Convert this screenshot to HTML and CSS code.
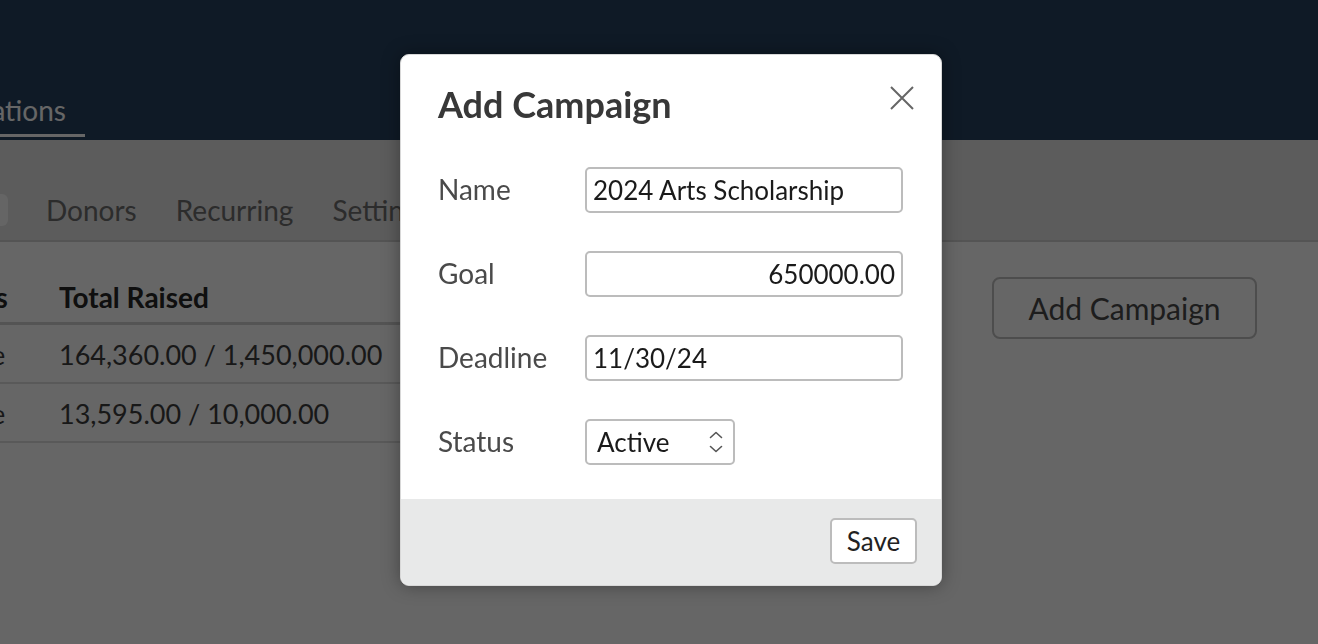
FILE: index.html
```html
<!DOCTYPE html>
<html lang="en">
<head>
<meta charset="utf-8">
<title>Campaigns</title>
<link rel="stylesheet" href="styles.css">
</head>
<body>
<div class="app">
  <header class="topbar">
    <nav class="mainnav">
      <a class="nav-item active">Donations</a>
    </nav>
  </header>
  <div class="subnav">
    <div class="pill-wrap"><span class="pill">Campaigns</span></div>
    <a class="tab">Donors</a>
    <a class="tab">Recurring</a>
    <a class="tab">Settings</a>
  </div>
  <main class="content">
    <table class="campaigns">
      <thead>
        <tr><th class="col-status">Status</th><th class="col-total">Total Raised</th><th class="col-rest"></th></tr>
      </thead>
      <tbody>
        <tr><td class="col-status">Active</td><td class="col-total">164,360.00 / 1,450,000.00</td><td class="col-rest"></td></tr>
        <tr><td class="col-status">Active</td><td class="col-total">13,595.00 / 10,000.00</td><td class="col-rest"></td></tr>
      </tbody>
    </table>
    <button class="add-btn">Add Campaign</button>
  </main>
</div>

<div class="overlay"></div>

<div class="modal" role="dialog" aria-labelledby="modal-title">
  <div class="modal-header">
    <h2 id="modal-title" class="modal-title">Add Campaign</h2>
    <button class="close-btn" aria-label="Close">
      <svg width="24" height="24" viewBox="0 0 24 24"><path d="M1 1 L23 23 M23 1 L1 23" stroke="#666" stroke-width="2" fill="none"/></svg>
    </button>
  </div>
  <div class="modal-body">
    <label class="field-label" for="f-name">Name</label>
    <input id="f-name" class="field-input" type="text" value="2024 Arts Scholarship">
    <label class="field-label" for="f-goal">Goal</label>
    <input id="f-goal" class="field-input num" type="text" value="650000.00">
    <label class="field-label" for="f-deadline">Deadline</label>
    <input id="f-deadline" class="field-input" type="text" value="11/30/24">
    <label class="field-label" for="f-status">Status</label>
    <div class="select-wrap">
      <select id="f-status" class="field-select">
        <option>Active</option>
        <option>Inactive</option>
      </select>
      <svg class="select-arrows" width="14" height="22" viewBox="0 0 14 22"><path d="M1.5 6.5 L7 1.5 L12.5 6.5 M1.5 15.5 L7 20.5 L12.5 15.5" stroke="#555" stroke-width="1.6" fill="none" stroke-linecap="round" stroke-linejoin="round"/></svg>
    </div>
  </div>
  <div class="modal-footer">
    <button class="save-btn">Save</button>
  </div>
</div>
</body>
</html>
```

FILE: styles.css
```css
* { box-sizing: border-box; }

html, body {
  margin: 0;
  padding: 0;
  height: 100%;
}

body {
  font-family: Lato, "Noto Sans", "Liberation Sans", sans-serif;
  background: #ffffff;
  overflow: hidden;
}

.app {
  width: 1318px;
  height: 644px;
  overflow: hidden;
}

/* ---- top bar ---- */
.topbar {
  height: 140px;
  background: #26415f;
  display: flex;
  align-items: flex-end;
}

.mainnav {
  width: 85px;
  display: flex;
  justify-content: flex-end;
  margin-bottom: 3px;
}

.nav-item {
  flex: none;
  font-size: 28px;
  line-height: 1.2;
  color: #ffffff;
  padding: 0 19px 6px;
  border-bottom: 3px solid #ffffff;
  white-space: nowrap;
}

/* ---- sub navigation ---- */
.subnav {
  height: 102px;
  background: #e5e5e5;
  border-bottom: 2px solid #d2d2d2;
  display: flex;
  align-items: center;
  padding-top: 50px;
  padding-bottom: 10px;
}

.pill-wrap {
  width: 8px;
  flex: none;
  display: flex;
  justify-content: flex-end;
}

.pill {
  flex: none;
  background: #fcfcfc;
  border-radius: 6px;
  font-size: 28px;
  line-height: 32px;
  padding: 0 19px;
  color: #333;
  white-space: nowrap;
}

.tab {
  font-size: 28px;
  line-height: 35px;
  color: #6e6e6e;
  padding: 0 19px;
  white-space: nowrap;
}
.pill-wrap + .tab { margin-left: 19px; }
.tab + .tab { margin-left: 1px; }

/* ---- content ---- */
.content {
  display: flex;
  align-items: flex-start;
  padding: 30px 61px 0 0;
}

.campaigns {
  border-collapse: collapse;
  margin-left: -70px;
}

.campaigns th,
.campaigns td {
  text-align: left;
  white-space: nowrap;
  padding: 0;
}

.campaigns th {
  font-size: 28px;
  font-weight: 700;
  color: #262626;
  line-height: 34px;
  padding-top: 8px;
  padding-bottom: 8px;
  border-bottom: 3px solid #d2d2d2;
}

.campaigns td {
  font-size: 27px;
  color: #3e3e3e;
  line-height: 34px;
  padding-top: 13px;
  padding-bottom: 10px;
  border-bottom: 2px solid #dedede;
}

.col-status { width: 129px; }
.col-total { width: 400px; }
.col-rest { width: 260px; }

.add-btn {
  margin-left: auto;
  margin-top: 5px;
  width: 265px;
  height: 62px;
  font-family: inherit;
  font-size: 30px;
  color: #4a4a4a;
  background: #ffffff;
  border: 2px solid #c0c0c0;
  border-radius: 8px;
  padding: 0;
}

/* ---- overlay ---- */
.overlay {
  position: fixed;
  inset: 0;
  background: rgba(0, 0, 0, 0.6);
}

/* ---- modal ---- */
.modal {
  position: absolute;
  left: 400px;
  top: 54px;
  width: 542px;
  height: 532px;
  background: #ffffff;
  border: 1px solid #d8d8d8;
  border-radius: 9px;
  overflow: hidden;
  box-shadow: 0 0 18px rgba(0, 0, 0, 0.35);
  display: flex;
  flex-direction: column;
}

.modal-header {
  display: flex;
  justify-content: space-between;
  align-items: flex-start;
  padding: 28px 27px 0 37px;
}

.modal-title {
  margin: 0;
  font-size: 36px;
  font-weight: 700;
  line-height: 43px;
  color: #383838;
}

.close-btn {
  margin-top: 3px;
  width: 24px;
  height: 24px;
  padding: 0;
  border: none;
  background: none;
  display: block;
}
.close-btn svg { display: block; }

.modal-body {
  flex: 1;
  display: grid;
  grid-template-columns: 147px 318px;
  grid-auto-rows: 46px;
  row-gap: 38px;
  align-items: center;
  padding: 41px 37px 0;
}

.field-label {
  font-size: 28px;
  color: #4a4a4a;
  position: relative;
  top: -1px;
}

.field-input {
  height: 46px;
  width: 318px;
  font-family: inherit;
  font-size: 26px;
  color: #1a1a1a;
  border: 2px solid #bcbcbc;
  border-radius: 5px;
  padding: 0 6px;
  background: #fff;
}
.field-input.num { text-align: right; }

.select-wrap {
  position: relative;
  width: 150px;
  height: 46px;
}

.field-select {
  appearance: none;
  -webkit-appearance: none;
  width: 150px;
  height: 46px;
  font-family: inherit;
  font-size: 26px;
  color: #1a1a1a;
  border: 2px solid #bcbcbc;
  border-radius: 5px;
  padding: 0 0 0 10px;
  background: #fff;
}

.select-arrows {
  position: absolute;
  right: 12px;
  top: 12px;
  pointer-events: none;
}

.modal-footer {
  height: 86px;
  background: #e8e9e9;
  display: flex;
  justify-content: flex-end;
  align-items: flex-start;
  padding: 19px 24px 0;
}

.save-btn {
  width: 87px;
  height: 46px;
  font-family: inherit;
  font-size: 26px;
  color: #222;
  background: #fff;
  border: 2px solid #bcbcbc;
  border-radius: 5px;
  padding: 0;
}
```
